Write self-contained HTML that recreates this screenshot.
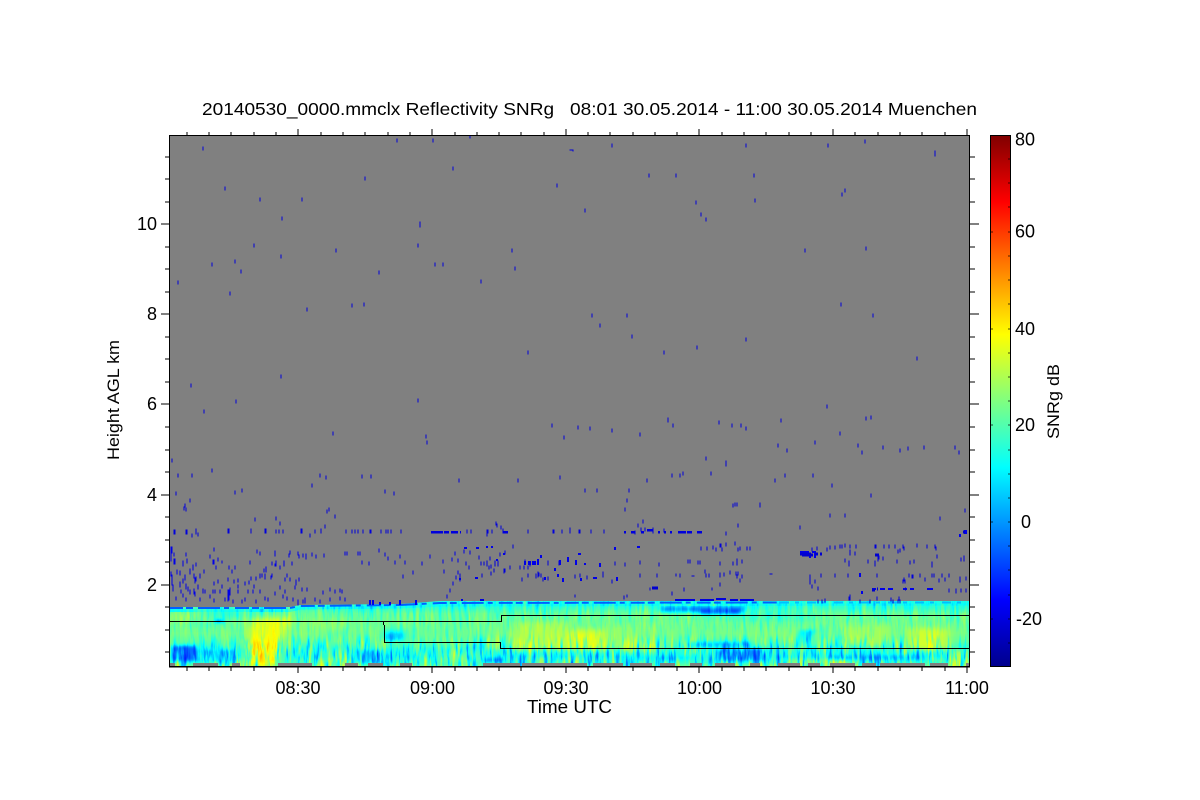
<!DOCTYPE html>
<html><head><meta charset="utf-8"><title>Reflectivity SNRg</title>
<style>
html,body{margin:0;padding:0;background:#fff}
svg{display:block}
text{font-family:"Liberation Sans",sans-serif;fill:#000;white-space:pre}
</style></head><body>
<svg width="1200" height="800" viewBox="0 0 1200 800" xmlns="http://www.w3.org/2000/svg">
<defs>
<linearGradient id="jet" x1="0" y1="1" x2="0" y2="0">
<stop offset="0" stop-color="#00008c"/><stop offset=".125" stop-color="#0000ff"/><stop offset=".25" stop-color="#0080ff"/><stop offset=".375" stop-color="#00ffff"/><stop offset=".5" stop-color="#80ff80"/><stop offset=".625" stop-color="#ffff00"/><stop offset=".75" stop-color="#ff8000"/><stop offset=".875" stop-color="#ff0000"/><stop offset="1" stop-color="#800000"/>
</linearGradient>
<linearGradient id="v" gradientUnits="userSpaceOnUse" x1="0" y1="600" x2="0" y2="667">
<stop offset="0" stop-color="#666"/><stop offset=".12" stop-color="#6e6e6e"/><stop offset=".2" stop-color="#7a7a7a"/><stop offset=".5" stop-color="#7e7e7e"/><stop offset=".62" stop-color="#787878"/><stop offset=".72" stop-color="#6c6c6c"/><stop offset=".85" stop-color="#666"/><stop offset=".94" stop-color="#6e6e6e"/><stop offset="1" stop-color="#7c7c7c"/>
</linearGradient>
<linearGradient id="mg" gradientUnits="userSpaceOnUse" x1="0" y1="600" x2="0" y2="667">
<stop offset="0" stop-color="#777"/><stop offset=".5" stop-color="#444"/><stop offset=".72" stop-color="#eee"/><stop offset="1" stop-color="#fff"/>
</linearGradient>
<mask id="nm" maskUnits="userSpaceOnUse" x="169" y="600" width="801" height="67"><rect x="169" y="600" width="801" height="67" fill="url(#mg)"/></mask>
<filter id="map" filterUnits="userSpaceOnUse" x="169" y="600" width="801" height="67" color-interpolation-filters="sRGB">
<feComponentTransfer>
<feFuncR type="table" tableValues="0 0 0 0 .5 1 1 1 .5"/>
<feFuncG type="table" tableValues="0 0 .5 1 1 1 .5 0 0"/>
<feFuncB type="table" tableValues=".55 1 1 1 .5 0 0 0 0"/>
</feComponentTransfer>
</filter>
<filter id="b3" filterUnits="userSpaceOnUse" x="150" y="580" width="840" height="110" color-interpolation-filters="sRGB"><feGaussianBlur stdDeviation="5 3"/></filter>
<filter id="b1" filterUnits="userSpaceOnUse" x="150" y="580" width="840" height="110" color-interpolation-filters="sRGB"><feGaussianBlur stdDeviation="2.5 1.5"/></filter>
<filter id="nd" filterUnits="userSpaceOnUse" x="169" y="600" width="801" height="67" color-interpolation-filters="sRGB">
<feTurbulence type="fractalNoise" baseFrequency="0.3 0.04" numOctaves="3" seed="7"/>
<feColorMatrix type="matrix" values="0 0 0 0 0 0 0 0 0 0 0 0 0 0 0 1.3 0 0 0 -.58"/>
</filter>
<filter id="nl" filterUnits="userSpaceOnUse" x="169" y="600" width="801" height="67" color-interpolation-filters="sRGB">
<feTurbulence type="fractalNoise" baseFrequency="0.25 0.035" numOctaves="3" seed="23"/>
<feColorMatrix type="matrix" values="0 0 0 0 1 0 0 0 0 1 0 0 0 0 1 .8 0 0 0 -.38"/>
</filter>
<clipPath id="cp"><rect x="169" y="135" width="801" height="532"/></clipPath>
</defs>

<rect x="169" y="135" width="801" height="532" fill="#808080"/>

<g filter="url(#map)">
<rect x="169" y="600" width="801" height="67" fill="url(#v)"/>
<g filter="url(#b3)">
<path d="M252 618h40l-12 24l-2 25h-34l4-25z" fill="#9c9c9c"/>
<path d="M252 642h18l3 25h-26z" fill="#a4a4a4"/>
<rect x="200" y="612" width="50" height="5" fill="#666"/>
<rect x="175" y="622" width="45" height="3" fill="#6c6c6c"/>
<rect x="185" y="608" width="50" height="2" fill="#606060"/>
<rect x="170" y="612" width="20" height="12" fill="#888"/>
<rect x="300" y="620" width="50" height="20" fill="#848484"/>
<rect x="322" y="630" width="35" height="12" fill="#777"/>
<rect x="385" y="630" width="20" height="10" fill="#606060"/>
<rect x="410" y="625" width="60" height="18" fill="#7a7a7a"/>
<rect x="515" y="622" width="55" height="28" fill="#8c8c8c"/>
<rect x="570" y="630" width="38" height="20" fill="#989898"/>
<rect x="605" y="625" width="60" height="25" fill="#848484"/>
<rect x="330" y="650" width="30" height="14" fill="#7e7e7e"/>
<rect x="440" y="652" width="40" height="12" fill="#7a7a7a"/>
<rect x="780" y="660" width="70" height="6" fill="#888"/>
<rect x="700" y="612" width="120" height="8" fill="#707070"/>
<rect x="840" y="625" width="50" height="20" fill="#888"/>
<rect x="908" y="628" width="40" height="22" fill="#949494"/>
<rect x="950" y="650" width="20" height="16" fill="#8e8e8e"/>
</g>
<g filter="url(#b1)">
<rect x="172" y="646" width="24" height="15" fill="#3c3c3c"/>
<rect x="196" y="650" width="40" height="12" fill="#585858"/>
<rect x="355" y="650" width="26" height="13" fill="#505050"/>
<rect x="386" y="633" width="16" height="7" fill="#505050"/>
<rect x="483" y="658" width="20" height="4" fill="#444"/>
<rect x="660" y="606" width="84" height="6" fill="#444"/>
<rect x="700" y="609" width="40" height="5" fill="#303030"/>
<rect x="690" y="642" width="60" height="6" fill="#505050"/>
<rect x="718" y="649" width="48" height="12" fill="#444"/>
<path d="M794 648l6-18h16l-8 12l-6 6z" fill="#5a5a5a"/>
<rect x="830" y="655" width="90" height="5" fill="#505050"/>
<rect x="640" y="656" width="50" height="4" fill="#5a5a5a"/>
<ellipse cx="219" cy="621" rx="4" ry="1.5" fill="#222"/>
</g>
<polyline points="169,610.5 290,610.5 300,608 400,607 440,605 970,604" fill="none" stroke="#646464" stroke-width="3"/>
<g mask="url(#nm)">
<rect x="169" y="600" width="801" height="67" filter="url(#nd)"/>
<rect x="169" y="600" width="801" height="67" filter="url(#nl)"/>
</g>
<polyline points="169,608 290,608 300,606 400,605 440,603 780,602.5" fill="none" stroke="#383838" stroke-width="2" stroke-dasharray="14 3 7 5 22 4 5 6"/>
<polyline points="780,602.5 970,602.5" fill="none" stroke="#505050" stroke-width="2" stroke-dasharray="9 6 4 8"/>
</g>

<path d="M169 600H970V601H440L400 604L300 605L290 607H169Z" fill="#808080"/>

<!-- bottom gaps -->
<path d="M170 664.5h5M193 664.5h25M232 664.5h8M278 664.5h34M345 664.5h13M368 664.5h15M400 664.5h12M483 664.5h37M522 664.5h65M593 664.5h30M630 664.5h22M660 664.5h15M690 664.5h12M715 664.5h20M750 664.5h10M778 664.5h22M808 664.5h12M830 664.5h25M862 664.5h14M880 664.5h45M930 664.5h18M966 664.5h4" fill="none" stroke="#808080" stroke-width="3"/>

<!-- specks -->
<g clip-path="url(#cp)" shape-rendering="crispEdges" fill="none" stroke-linecap="square">
<path stroke="#0000dc" stroke-width="1" d="M203 147v3M225 187v3M260 198v3M282 217v3M302 198v3M254 244v3M212 263v3M235 260v3M241 270v3M281 255v3M230 292v3M178 281v3M307 308v3M352 304v3M364 303v3M379 271v3M420 222v5M418 244v3M435 263v3M443 263v3M336 249v3M365 177v3M397 139v3M433 139v3M470 135v3M453 167v3M570 150h3v1M557 184v3M585 209v3M612 144v3M649 174v3M676 174v3M696 201v3M701 213v3M706 218v3M746 144v3M754 174v3M755 199v3M805 249v3M828 144v3M845 189v3M842 193v3M866 247v3M865 140v3M935 151v5M481 280v3M512 249v3M515 267v3M528 351v3M592 314v3M600 324v3M627 314v3M632 335v3M664 351v3M697 346v3M746 338v3M841 303v3M873 314v3M917 357v3M191 384v3M204 410v3M236 400v3M281 375v3M333 432v3M418 399v3M426 435v3M427 441v3M552 424v3M564 436v3M578 426v3M590 427v3M612 429v3M640 433v3M668 418v4M673 424v3M719 421v3M732 424v3M741 424v3M746 427v3M781 419v3M778 444v3M787 449v3M815 441v3M827 405v3M840 432v3M858 444v3M862 451v3M866 417v3M871 416v3M883 446v3M900 449v3M908 447v3M924 446v3M955 446v3M959 451v3M172 459v3M178 474v3M176 492v3M185 504v3M192 474v3M190 499v3M212 469v3M235 491v3M242 489v3M320 474v3M326 476v3M312 484v3M362 475v3M371 475v3M385 490v3M394 492v3M459 479v3M518 479v3M560 476v3M585 489v3M597 489v3M627 499v3M629 489v3M647 479v3M672 474v3M680 474v3M683 472v3M706 457v3M711 472v3M726 461v5M733 504v3M760 504v3M775 479v3M785 474v3M800 526v3M813 474v3M832 484v3M830 514v3M845 514v3M871 494v3M965 509v3M940 517v3M184 507v3M186 508v3M255 518v3M276 517v3M280 522v3M325 525v3M327 510v3M329 508v3M335 515v3M625 508v3M643 520v3M496 522v3M501 526v3M638 524v3M645 528v3M737 503v3M760 503v3M735 503v3"/>
<!-- row 3.15km -->
<path stroke="#0000dc" stroke-width="1" d="M174 530v4M175 530v4M186 530v4M187 530v4M192 534v3M196 529v5M198 533v3M228 529v4M229 529v4M251 529v4M265 529v4M266 529v4M276 530v3M279 530v3M283 530v3M301 529v4M302 529v4M310 534v3M315 530v3M321 529v4M346 530v3M352 530v3M355 530v3M358 530v3M363 530v3M370 530v3M371 530v3M381 530v3M386 530v3M388 530v3M391 530v3M401 530v3M467 530v3M471 530v3M487 530v3M488 530v3M492 530v3M528 530v3M553 530v3M554 530v3M562 530v3M570 528v5M579 530v3M580 530v3M591 530v3M604 530v3M497 524v3M501 526v3M487 533v3M503 529v4"/>
<path stroke="#0000dc" stroke-width="2.5" stroke-linecap="butt" d="M431 532h12M444 532h5M451 532h7M460 532h1M503 532h5M624 532h2M631 532h4M641 532h3M647 530h6M658 532h2M664 532h2M670 532h2M678 532h8M687 532h5M697 532h5"/>
<path stroke="#0000dc" stroke-width="1" d="M635 531v3M641 528v3M653 528v5M664 529v3M726 532v3M738 524v3"/>
<!-- 2-3 km field -->
<path stroke="#0000e8" stroke-width="1" d="M171 547v14M172 547v6M174 553v3M175 559v5M174 559v5M186 553v3M183 561v5M187 559v4M196 563v3M214 548v3M210 555v3M218 558v3M196 563v3M213 560v4M214 560v4M222 561v2M216 566v3M229 566v3M235 566v3M232 570v3M204 570v3M171 572v4M172 580v5M172 575v5M177 570v4M180 571v4M183 579v4M190 569v5M193 565v5M196 577v4M200 574v4M194 574v4M195 578v5M173 585v5M185 575v5M180 582v5M186 584v5M188 587v4M194 589v5M198 585v4M203 589v4M214 582v3M218 580v3M222 585v3M228 578v3M234 580v3M238 579v3M215 590v3M230 588v5M238 585v3M245 582v3M249 581v3M251 577v3M256 577v3M254 585v3M260 574v4M264 569v3M266 567v5M272 562v3M275 551v5M284 561v5M289 554v3M292 562v3M280 566v3M290 551v3M298 552v3M299 555v3M303 554v3M306 554v5M312 553v3M316 555v3M324 554v3M250 561v3M260 552v3M257 550v3M262 574v3M265 574v5M272 574v3M276 561v5M287 574v3M275 564v2M271 576v3M285 578v3M290 578v3M296 580v5M299 578v3M280 586v3M295 586v3M302 588v3M307 588v3M323 591v3M330 588v3M335 590v3M340 589v3M342 590v3M173 589v2M176 597v3M181 590v3M183 594v3M186 598v3M190 590v4M195 592v4M200 598v3M205 590v3M210 595v3M214 599v3M220 590v3M225 598v3M230 592v3M233 600v3M238 590v3M242 600v3M248 590v3M253 590v3M228 598v3M213 590v3M228 590v10M229 590v10M245 598v3M256 600v3M260 590v3M265 597v3M268 598v3M275 592v3M283 595v3M285 590v3M287 597v3M293 598v3M298 600v5M303 600v3M305 598v5M315 598v3M320 600v3M330 598v3M340 597v3M345 598v3M345 552v3M347 552v3M358 552v3M360 552v3M362 561v3M369 562v3M379 549v3M385 553v3M388 557v3M395 561v3M400 555v3M405 561v3M403 575v3M413 571v3M422 562v3M430 555v3M443 560v3M444 570v3M452 558v3M455 552v3M458 559v3M464 550v3M470 551v3M458 571v3M460 578v3M456 576v3M453 582v3M450 589v3M447 595v3"/>
<path stroke="#0000e8" stroke-width="2" stroke-linecap="butt" d="M370 600v5M373 600v5M380 602v3M390 602v3M400 600v5M416 600v5M464 548h3M476 548h3M487 546v2M492 546v2M530 561v4M533 561v4M535 561v4M538 559v6M525 561v4M529 561v4M560 560v5M568 557v5M576 560v5M585 563v2M600 563v4M460 578v2M497 559v2M504 553v2M578 554h3M558 574v3M475 578h3M563 578v4M581 578v3M593 578h4M617 577v4M637 547h3M615 547v3M545 577v3M541 555v3M555 568v3M800 554h4M803 552h3M800 552h3M806 552h3M810 553v5M815 553v5M812 552h4M860 573v4M862 591v3M872 589h4M880 589h5M888 589h5M903 589h3M906 589h1M910 589h4M928 589h5M927 589h1M960 534v3M964 531h3M964 533h3"/>
<path stroke="#0000dc" stroke-width="1" d="M490 557v3M513 545v3M505 551v3M500 553v3M479 556v3M466 562v3M481 562v3M484 562v3M487 561v5M495 561v5M498 561v5M510 566v3M525 560v3M530 563v3M548 561v4M559 561v4M615 562v3M625 563v3M640 561v3M659 563v3M720 562v3M737 562v3M737 559v3M460 575v3M469 566v3M482 574v3M489 566v3M491 565v3M494 569v3M491 572v3M504 569v4M505 569v3M520 566v3M524 566v3M528 566v3M539 573v3M541 574v3M522 578v3M528 574v3M536 574v4M538 572v5M543 578v3M548 577v3M575 575v3M580 574v3M587 576v3M603 572v5M612 580v3M640 574v3M657 574v3M680 574v3M706 574v3M709 574v3M720 573v4M724 573v3M730 571v3M736 572v3M737 575v3M705 570v3M460 574v5M684 588v3M575 595v2M624 596v3M627 595v2M650 588v2M672 592v3M676 574v2M692 576h2M712 588v2M688 560v3M690 560v3M698 561v3M700 561v3M707 547v3M701 547v3M740 547v3M747 547v3M750 547v3M713 546v3M720 544v3M722 548v3M716 548v3M721 544v3M726 543v3M735 542v3M738 548v3M720 583v3M733 562v3M738 572v3M740 579v3"/>
<path stroke="#0000dc" stroke-width="1" d="M742 575v3M742 560v3M770 574h2M810 575v5M821 574v3M835 574v3M848 574v3M877 574v3M909 574v3M920 574v3M932 574v3M845 559v3M868 560v3M875 561v5M849 561v5M878 556v5M897 560v3M910 561v3M914 560v3M932 562v5M913 575v3M949 574v3M942 574v3M961 558v3M964 556v5M934 574v3M903 580v3M904 578v3M912 575v3M925 578v3M905 580v3M939 579v3M945 578v3M960 577v5M966 577v3M966 589v3M961 589v3M956 589v3M815 580v3M812 585v3M810 581v3M818 587v3M850 550v3M842 545v3M850 545v3M856 545v3M875 545v3M884 545v3M889 545v3M876 545v3M903 545v3M927 545v3M935 545v3M895 545v3M904 547v3M936 547v3M917 544v3M937 555v3M900 549v3M879 556v3M883 557v3M812 548v3M817 547v3M827 548v3M830 546v3M835 546v3M840 545v3M845 544v3M850 552v3M855 552v3M877 597v3M849 597v3M818 600v3M822 600v3M825 599v3M860 600v3M870 600v3M850 595v5M891 598v3M893 600v3M899 597v3M898 600v3M900 600v3M956 590v3M949 589v3M898 550v3"/>
<path stroke="#0000d0" stroke-width="3" stroke-linecap="butt" d="M802 555h11M815 554h3M820 554h2M816 554h2M965 532h-2M652 588h6M877 589h1M905 589h1M800 554h11M875 555h4M872 590h3"/>
<path stroke="#0000dc" stroke-width="2" stroke-linecap="butt" d="M675 600h20M700 600h14M716 599h10M730 600h8M740 600h14M461 600h2M480 600h4"/>
</g>

<!-- black overlay lines -->
<path d="M169 621.5H501.5V615.5H970M383.5 621.5V625M384.5 625V642.5H500.5V648.5H970" fill="none" stroke="#000" stroke-width="1"/>

<!-- axes -->
<g fill="none" stroke="#000" stroke-width="1" shape-rendering="crispEdges">
<rect x="169.5" y="135.5" width="800" height="531"/>
<path d="M169 667H970"/>
<path d="M298 667v6M432 667v6M566 667v6M699 667v6M833 667v6M967 667v6M298 135v-6M432 135v-6M566 135v-6M699 135v-6M833 135v-6M967 135v-6"/>
<path d="M187 667v4M209 667v4M231 667v4M254 667v4M276 667v4M321 667v4M343 667v4M365 667v4M388 667v4M410 667v4M455 667v4M477 667v4M499 667v4M521 667v4M544 667v4M588 667v4M610 667v4M633 667v4M655 667v4M677 667v4M722 667v4M744 667v4M766 667v4M789 667v4M811 667v4M855 667v4M878 667v4M900 667v4M922 667v4M945 667v4M187 135v-3M209 135v-3M231 135v-3M254 135v-3M276 135v-3M321 135v-3M343 135v-3M365 135v-3M388 135v-3M410 135v-3M455 135v-3M477 135v-3M499 135v-3M521 135v-3M544 135v-3M588 135v-3M610 135v-3M633 135v-3M655 135v-3M677 135v-3M722 135v-3M744 135v-3M766 135v-3M789 135v-3M811 135v-3M855 135v-3M878 135v-3M900 135v-3M922 135v-3M945 135v-3"/>
<path d="M161 585h8M161 495h8M161 404h8M161 314h8M161 224h8M970 585h9M970 495h9M970 404h9M970 314h9M970 224h9"/>
<path d="M165 652h4M165 630h4M165 607h4M165 562h4M165 540h4M165 517h4M165 472h4M165 450h4M165 427h4M165 382h4M165 359h4M165 337h4M165 292h4M165 269h4M165 247h4M165 202h4M165 179h4M165 157h4M970 652h5M970 630h5M970 607h5M970 562h5M970 540h5M970 517h5M970 472h5M970 450h5M970 427h5M970 382h5M970 359h5M970 337h5M970 292h5M970 269h5M970 247h5M970 202h5M970 179h5M970 157h5"/>
</g>

<!-- colorbar -->
<rect x="990.5" y="135.5" width="20" height="531" fill="url(#jet)" stroke="#000"/>
<path d="M1008 159h2M1008 183h2M1008 207h2M1008 232h2M1008 256h2M1008 280h2M1008 304h2M1008 329h2M1008 353h2M1008 377h2M1008 401h2M1008 425h2M1008 450h2M1008 474h2M1008 498h2M1008 522h2M1008 546h2M1008 570h2M1008 595h2M1008 619h2M1008 643h2M991 232h2M991 329h2M991 425h2M991 522h2M991 619h2" stroke="#000" stroke-opacity=".7" fill="none" shape-rendering="crispEdges"/>

<!-- text -->
<text x="202" y="115" font-size="17.5" textLength="775" lengthAdjust="spacingAndGlyphs">20140530_0000.mmclx Reflectivity SNRg   08:01 30.05.2014 - 11:00 30.05.2014 Muenchen</text>
<g font-size="18" text-anchor="middle">
<text x="298" y="694">08:30</text><text x="432.5" y="694">09:00</text><text x="566" y="694">09:30</text><text x="699.5" y="694">10:00</text><text x="833" y="694">10:30</text><text x="967" y="694">11:00</text>
</g>
<text x="527" y="713" font-size="18" textLength="85" lengthAdjust="spacingAndGlyphs">Time UTC</text>
<g font-size="18" text-anchor="end">
<text x="157" y="591">2</text><text x="157" y="501">4</text><text x="157" y="410">6</text><text x="157" y="320">8</text><text x="157" y="230">10</text>
</g>
<text transform="translate(119 460) rotate(-90)" font-size="16.5" textLength="120" lengthAdjust="spacingAndGlyphs">Height AGL km</text>
<g font-size="18">
<text x="1015" y="145.5">80</text><text x="1015" y="237.5">60</text><text x="1015" y="335">40</text><text x="1015" y="431">20</text><text x="1021" y="528">0</text><text x="1016" y="625">-20</text>
</g>
<text transform="translate(1059 439) rotate(-90)" font-size="16.5" textLength="75" lengthAdjust="spacingAndGlyphs">SNRg dB</text>
</svg>
</body></html>
